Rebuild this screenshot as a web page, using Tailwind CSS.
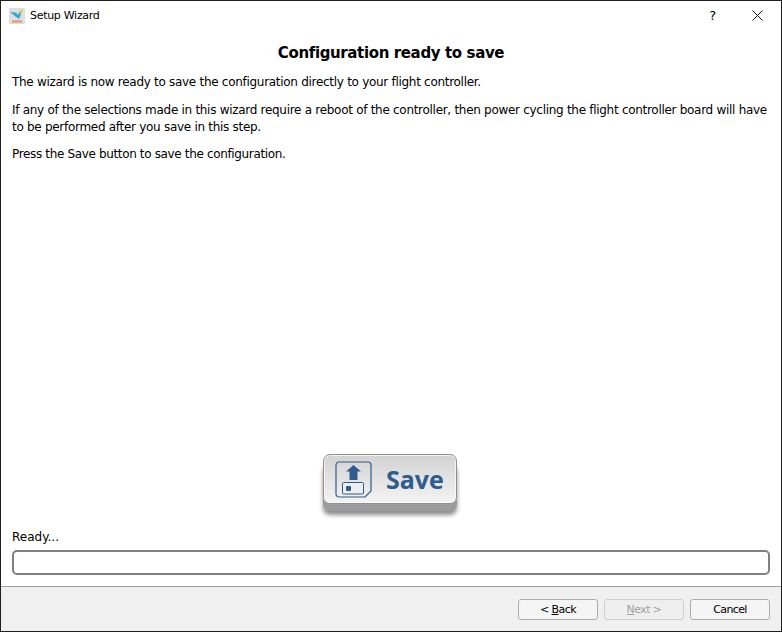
<!DOCTYPE html>
<html lang="en">
<head>
    <meta charset="UTF-8">
    <title>Setup Wizard</title>
    <script src="https://cdn.jsdelivr.net/npm/@tailwindcss/browser@4"></script>
</head>
<body class="bg-white">
    <div class="w-[782px] h-[632px] flex flex-col border border-[#1f1f1f] bg-white text-black text-[12px] overflow-hidden font-['DejaVu_Sans',sans-serif] tracking-[-0.29px]">
        <!-- Title bar -->
        <header class="h-[30px] shrink-0 flex items-center pl-[8px]">
            <svg class="w-4 h-4 shrink-0" viewBox="0 0 16 16">
                <rect width="16" height="16" rx="1" fill="#dedede"/>
                <path d="M1 4 L7 4.5 L9 7 L11 3 L12 6 L10 11 L6.5 8.5 Z" fill="#2fa8d5"/>
                <path d="M10 4 L14 1 L12.5 6 Z" fill="#e9c33b"/>
                <rect x="3" y="12.5" width="10" height="2" fill="#e8916a"/>
            </svg>
            <span class="ml-[5px] text-[11px]">Setup Wizard</span>
            <span class="ml-auto text-[13px] w-[45px] text-center">?</span>
            <button class="w-[45px] h-[30px] mr-[1px] mb-[2px] flex items-center justify-center">
                <svg class="w-[11px] h-[11px]" viewBox="0 0 11 11"><path d="M0.5 0.5 L10.5 10.5 M10.5 0.5 L0.5 10.5" stroke="#111" stroke-width="1" fill="none"/></svg>
            </button>
        </header>

        <!-- Page -->
        <main class="flex-1 flex flex-col px-[11px]">
            <h1 class="text-center font-bold text-[15px] leading-[20px] mt-[12px] mb-[11px] tracking-[-0.37px]">Configuration ready to save</h1>
            <p class="leading-[17px]">The wizard is now ready to save the configuration directly to your flight controller.</p>
            <p class="leading-[17px] mt-[11px]">If any of the selections made in this wizard require a reboot of the controller, then power cycling the flight controller board will have<br>to be performed after you save in this step.</p>
            <p class="leading-[17px] mt-[10px] tracking-[-0.35px]">Press the Save button to save the configuration.</p>

            <div class="flex-1 flex items-end justify-center">
                <!-- Save button -->
                <button class="w-[134px] h-[50px] mb-[25px] -ml-[2px] flex items-center rounded-[7px] border border-[#8f8f8f] bg-gradient-to-b from-[#d2d2d2] to-[#f4f4f4] shadow-[inset_0_0_0_1px_rgba(255,255,255,0.7),0_7px_0_#9c9c9c,0_11px_4px_rgba(0,0,0,0.45)] pl-[11px]">
                    <svg class="w-[37px] h-[37px] shrink-0" viewBox="0 0 37 37">
                        <path d="M4 1 H33 A3 3 0 0 1 36 4 V30 L30 36 H4 A3 3 0 0 1 1 33 V4 A3 3 0 0 1 4 1 Z" fill="none" stroke="#2f5b8f" stroke-width="1.2"/>
                        <path d="M18.5 4 L26 10.5 H22.5 V19 H14.5 V10.5 H11 Z" fill="#2f5b8f"/>
                        <rect x="7.5" y="21.5" width="21" height="11.5" rx="1" fill="#eeeeee" stroke="#2f5b8f" stroke-width="1"/>
                        <rect x="11" y="25" width="5" height="5" rx="1" fill="#2f5b8f"/>
                    </svg>
                    <span class="ml-[14px] text-[25px] leading-none font-bold text-[#2f5b8f] tracking-normal font-['Open_Sans',sans-serif]">Save</span>
                </button>
            </div>

            <p class="leading-[17px] tracking-normal">Ready...</p>
            <div class="h-[25px] mt-[4px] mb-[11px] rounded-[5px] border-2 border-[#808080] bg-white"></div>
        </main>

        <!-- Footer -->
        <footer class="h-[45px] shrink-0 flex items-center justify-end gap-[6px] pr-[11px] border-t border-[#a0a0a0] bg-[#f0f0f0]">
            <button class="w-[80px] h-[21px] pt-[1px] rounded-[3px] border border-[#acacac] bg-[#f5f5f5] text-[11px] leading-none tracking-[-0.6px]">&lt; <span class="underline">B</span>ack</button>
            <button class="w-[80px] h-[21px] pt-[1px] rounded-[3px] border border-[#cfcfcf] bg-[#efefef] text-[#a0a0a0] text-[11px] leading-none tracking-[-0.6px]"><span class="underline">N</span>ext &gt;</button>
            <button class="w-[80px] h-[21px] pt-[1px] rounded-[3px] border border-[#acacac] bg-[#f5f5f5] text-[11px] leading-none tracking-[-0.6px]">Cancel</button>
        </footer>
    </div>
</body>
</html>
